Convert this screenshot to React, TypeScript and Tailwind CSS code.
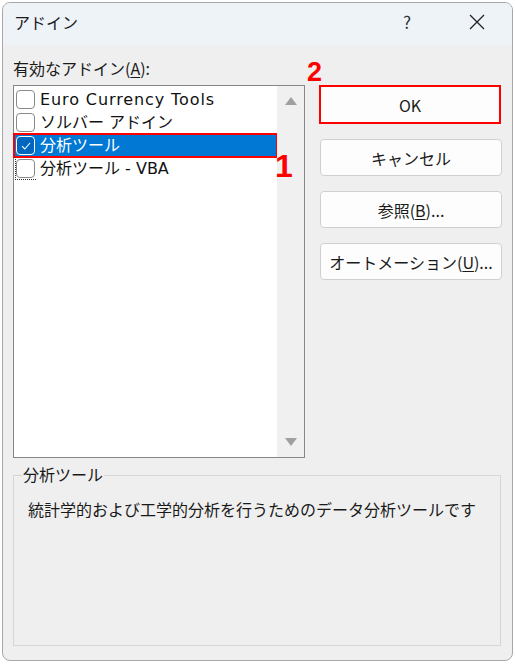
import React from 'react';

const font = { fontFamily: '"Noto Sans CJK JP", "Noto Sans", sans-serif' };
const listFont = { fontFamily: '"DejaVu Sans", "Noto Sans CJK JP", sans-serif' };
const markFont = { fontFamily: '"Liberation Sans", Arial, sans-serif' };

const items = [
  { label: 'Euro Currency Tools', checked: false, wide: true },
  { label: 'ソルバー アドイン', checked: false },
  { label: '分析ツール', checked: true, selected: true },
  { label: '分析ツール - VBA', checked: false, focus: true },
];

const CheckBox = ({ checked }: { checked?: boolean }) => (
  <span
    className={`flex items-center justify-center w-[19px] h-[19px] rounded-[4px] border shrink-0 ${
      checked ? 'border-white bg-[#0067c0]' : 'border-[#8a8a8a] bg-white'
    }`}
  >
    {checked && (
      <svg width="12" height="12" viewBox="0 0 12 12">
        <path d="M2 6.2 L4.8 9 L10 3" fill="none" stroke="white" strokeWidth="1.1" />
      </svg>
    )}
  </span>
);

const Btn = ({ children, highlight }: { children: React.ReactNode; highlight?: boolean }) => (
  <button
    className={`w-[182px] flex items-center justify-center text-[16px] text-[#1a1a1a] bg-[#fdfdfd] ${
      highlight ? 'h-[39px] border-2 border-[#ff0000]' : 'h-[37px] border border-[#d0d0d0] rounded-[4px]'
    }`}
  >
    {children}
  </button>
);

export default function App() {
  return (
    <div className="relative w-[515px] h-[664px] bg-white p-[2px]" style={font}>
      <div className="w-[511px] h-[659px] rounded-[8px] border border-[#a8a8a8] bg-[#efefef] overflow-hidden flex flex-col">
        {/* title bar */}
        <div className="h-[42px] bg-[#eef3f8] flex items-start pt-[7px] shrink-0 leading-[24px]">
          <span className="pl-[11px] text-[16px] text-[#1a1a1a]">アドイン</span>
          <span className="ml-auto mr-[58px] text-[17px] text-[#333]">?</span>
          <svg className="mr-[27px] mt-[4px]" width="16" height="16" viewBox="0 0 16 16">
            <path d="M1 1 L15 15 M15 1 L1 15" stroke="#222" strokeWidth="1.3" />
          </svg>
        </div>

        <div className="flex flex-col px-[10px]">
          <div className="flex gap-[15px]">
            {/* left */}
            <div className="w-[292px] flex flex-col">
              <div className="h-[40px] pt-[13px] text-[16px] text-[#1a1a1a] leading-[20px]">
                有効なアドイン(<span className="underline underline-offset-2">A</span>):
              </div>
              <div className="h-[373px] border border-[#868686] bg-white flex">
                <div className="w-[263px] pt-[2px] flex flex-col" style={listFont}>
                  {items.map((it) => (
                    <div
                      key={it.label}
                      className={`h-[23px] flex items-center gap-[5px] pl-[2px] text-[16px] leading-none ${
                        it.selected
                          ? 'bg-[#0078d4] text-white outline-2 outline-[#ff0000] -outline-offset-1'
                          : 'text-[#111]'
                      }`}
                    >
                      {it.focus ? (
                        <span className="h-[23px] flex items-center -ml-[1px] pr-[1px] border-l border-b border-dotted border-[#333]">
                          <CheckBox checked={it.checked} />
                        </span>
                      ) : (
                        <CheckBox checked={it.checked} />
                      )}
                      <span className={`whitespace-nowrap ${it.wide ? 'tracking-[0.9px]' : ''} ${it.focus ? '-ml-[1px]' : ''}`}>
                        {it.label}
                      </span>
                    </div>
                  ))}
                </div>
                <div className="flex-1 bg-[#f0f0f0] flex flex-col items-center justify-between py-[11px]">
                  <svg width="12" height="8" viewBox="0 0 12 8">
                    <path d="M6 0 L12 8 L0 8 Z" fill="#a0a0a0" />
                  </svg>
                  <svg width="12" height="8" viewBox="0 0 12 8">
                    <path d="M0 0 L12 0 L6 8 Z" fill="#a0a0a0" />
                  </svg>
                </div>
              </div>
            </div>

            {/* right */}
            <div className="flex flex-col items-start pt-[40px]">
              <div className="flex flex-col gap-[15px] -ml-[1px]">
                <Btn highlight>OK</Btn>
                <div className="flex flex-col gap-[15px] ml-[1px]">
                  <Btn>キャンセル</Btn>
                  <Btn>
                    参照(<span className="underline underline-offset-2">B</span>)...
                  </Btn>
                  <Btn>
                    オートメーション(<span className="underline underline-offset-2">U</span>)...
                  </Btn>
                </div>
              </div>
            </div>
          </div>

          {/* group box */}
          <div className="relative mt-[17px] h-[171px] w-[488px] border border-[#d6d6d6]">
            <span className="absolute -top-[12px] left-[8px] px-[1px] bg-[#efefef] text-[16px] leading-[20px] text-[#1a1a1a]">
              分析ツール
            </span>
            <div className="pt-[23px] pl-[14px] text-[16px] text-[#1a1a1a] leading-[20px] whitespace-nowrap">
              統計学的および工学的分析を行うためのデータ分析ツールです
            </div>
          </div>
        </div>
      </div>

      {/* annotation marks */}
      <span className="absolute left-[275px] top-[150px] text-[32px] font-bold text-[#ff0000] leading-none" style={markFont}>
        1
      </span>
      <span className="absolute left-[307px] top-[59px] text-[27px] font-bold text-[#ff0000] leading-none" style={markFont}>
        2
      </span>
    </div>
  );
}
